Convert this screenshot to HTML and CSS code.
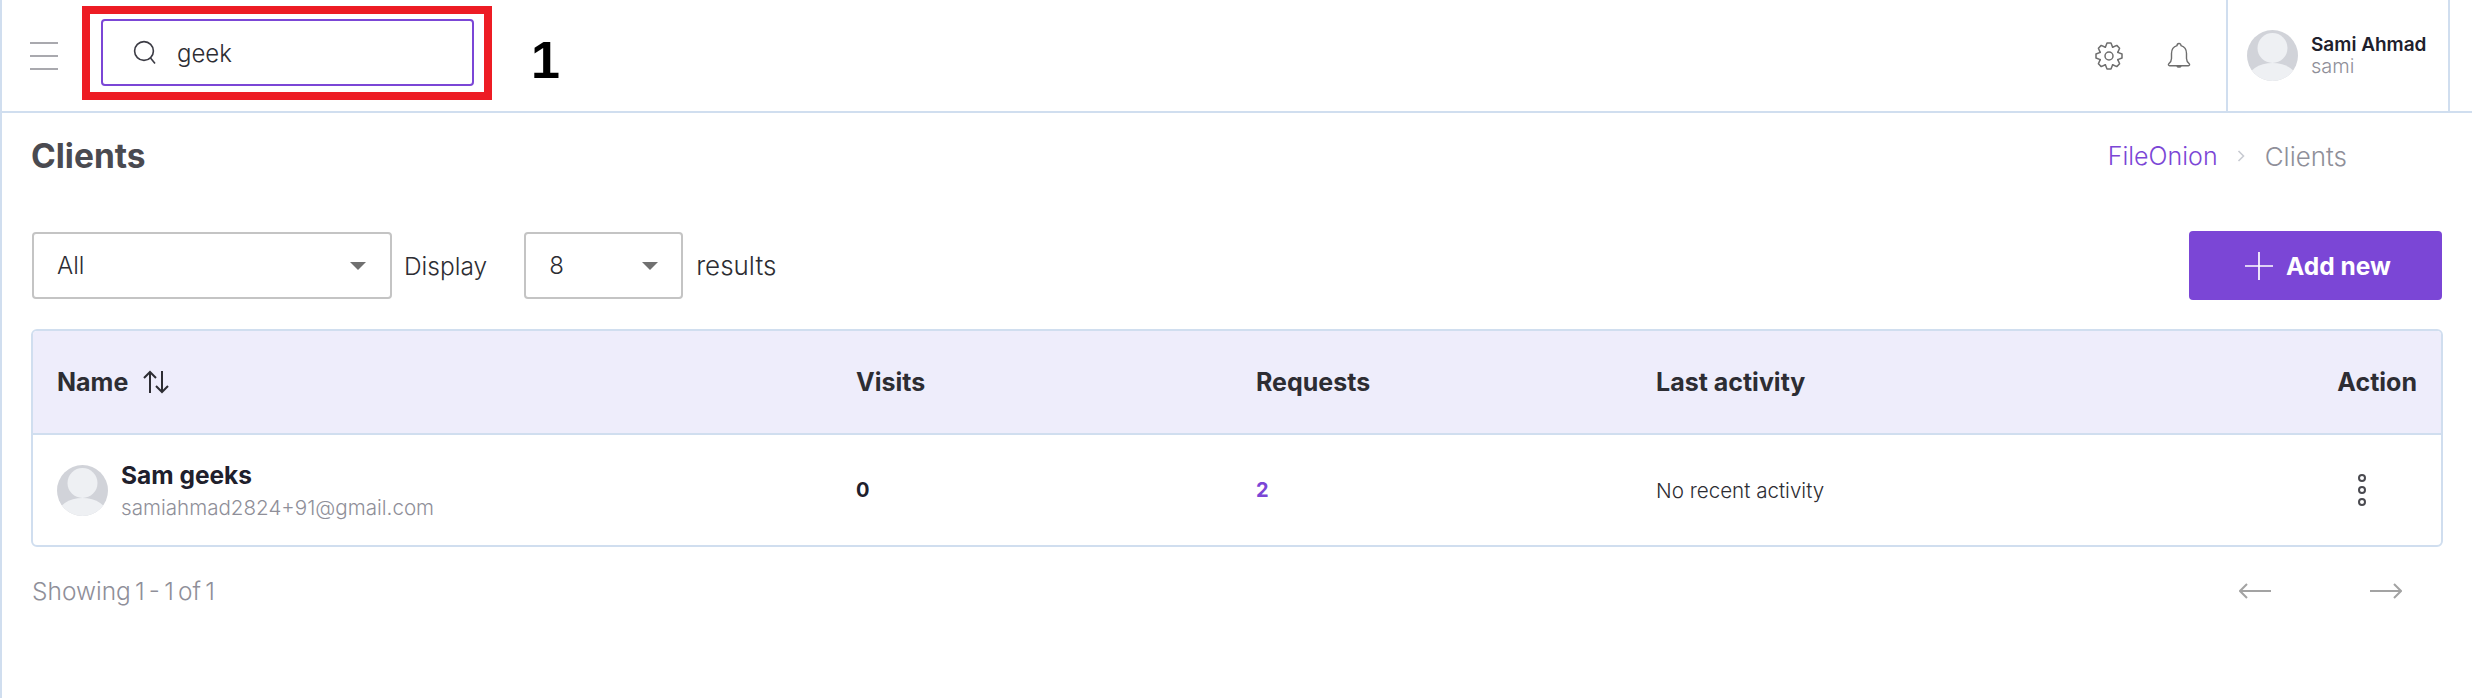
FILE: index.html
```html
<!DOCTYPE html>
<html lang="en">
<head>
<meta charset="utf-8">
<title>Clients</title>
<link rel="stylesheet" href="styles.css">
</head>
<body>
<div class="app">
  <header class="topbar">
    <button class="menu" aria-label="Menu"><span></span><span></span><span></span></button>
    <div class="search">
      <svg class="search-icon" viewBox="0 0 24 28" fill="none" stroke="#3b3b44" stroke-width="1.6"><circle cx="11" cy="12" r="9.4"/><path d="M17.5 19l4.500 5.500"/></svg>
      <span class="search-text">geek</span>
    </div>
    <div class="topbar-right">
      <svg class="gear" viewBox="-14 -14 28 28" fill="none" stroke="#6e6e6e" stroke-width="1.5" stroke-linejoin="round" stroke-linecap="round">
        <circle r="4"/>
        <path id="gear-tooth" d="M-3.64 -8.78L-2 -13H2L3.64 -8.78"/>
        <use href="#gear-tooth" transform="rotate(45)"/>
        <use href="#gear-tooth" transform="rotate(90)"/>
        <use href="#gear-tooth" transform="rotate(135)"/>
        <use href="#gear-tooth" transform="rotate(180)"/>
        <use href="#gear-tooth" transform="rotate(225)"/>
        <use href="#gear-tooth" transform="rotate(270)"/>
        <use href="#gear-tooth" transform="rotate(315)"/>
      </svg>
      <svg class="bell" viewBox="0 0 24 28" fill="none" stroke="#6e6e6e" stroke-width="1.4" stroke-linejoin="round"><path d="M12 1.500c-1.400 0-2 1-2 2.200C6.500 4.800 4.500 7.800 4.500 11.500v5c0 2.200-1 3.800-2.700 5.300-.8.8-.3 2 .8 2h18.800c1.100 0 1.600-1.200.8-2-1.700-1.500-2.700-3.100-2.700-5.300v-5c0-3.700-2-6.700-5.500-7.800 0-1.200-.6-2.200-2-2.200z"/><path d="M10 24c.3 1.500 3.700 1.500 4 0" fill="#6e6e6e"/></svg>
      <div class="profile">
        <svg class="avatar" viewBox="0 0 51 51"><use href="#avatar-shape"/></svg>
        <div class="profile-text">
          <div class="profile-name">Sami Ahmad</div>
          <div class="profile-user">sami</div>
        </div>
      </div>
    </div>
  </header>

  <div class="annotation-box"></div>
  <div class="annotation-num">1</div>

  <main class="content">
    <div class="title-row">
      <h1 class="title">Clients</h1>
      <nav class="crumbs">
        <span class="crumb-link">FileOnion</span>
        <svg class="crumb-sep" viewBox="0 0 8 12" fill="none" stroke="#c8cbd2" stroke-width="1.6"><path d="M1.500 1l5 5-5 5"/></svg>
        <span class="crumb-current">Clients</span>
      </nav>
    </div>

    <div class="toolbar">
      <div class="select select-wide"><span>All</span><i class="caret"></i></div>
      <span class="tool-label tool-display">Display</span>
      <div class="select select-narrow"><span>8</span><i class="caret"></i></div>
      <span class="tool-label tool-results">results</span>
      <button class="add-btn">
        <svg class="plus" viewBox="0 0 28 28" stroke="#fff" stroke-width="1.700"><path d="M0 14h28M14 0v28"/></svg>
        Add new
      </button>
    </div>

    <section class="table">
      <div class="thead">
        <div class="th name-head">Name
          <svg class="sort" viewBox="0 0 28 24" fill="none" stroke="#2d2d33" stroke-width="2"><path d="M8 23V2M2 8l6-6 6 6M20 1v21M14 16l6 6 6-6"/></svg>
        </div>
        <div class="th">Visits</div>
        <div class="th">Requests</div>
        <div class="th">Last activity</div>
        <div class="th th-right">Action</div>
      </div>
      <div class="trow">
        <div class="client">
          <svg class="avatar" viewBox="0 0 51 51"><use href="#avatar-shape"/></svg>
          <div>
            <div class="client-name">Sam geeks</div>
            <div class="client-mail">samiahmad2824+91@gmail.com</div>
          </div>
        </div>
        <div class="num">0</div>
        <div class="num num-link">2</div>
        <div class="activity">No recent activity</div>
        <div class="dots"><i></i><i></i><i></i></div>
      </div>
    </section>

    <div class="pager">
      <span class="showing">Showing 1 - 1 of 1</span>
      <div class="pager-arrows">
        <svg class="arrow" viewBox="0 0 32 16" fill="none" stroke="#a3a3a3" stroke-width="2"><path d="M32 8H1M8 1L1 8l7 7"/></svg>
        <svg class="arrow" viewBox="0 0 32 16" fill="none" stroke="#a3a3a3" stroke-width="2"><path d="M0 8h31M24 1l7 7-7 7"/></svg>
      </div>
    </div>
  </main>
</div>

<svg class="defs" width="0" height="0" aria-hidden="true">
  <defs>
    <clipPath id="avatar-clip"><circle cx="25.500" cy="25.500" r="25.500"/></clipPath>
    <g id="avatar-shape" clip-path="url(#avatar-clip)">
      <rect width="51" height="51" fill="#d1d3d9"/>
      <circle cx="25.500" cy="18" r="15" fill="#eef0f3"/>
      <ellipse cx="25.500" cy="50" rx="25" ry="17" fill="#eef0f3"/>
    </g>
  </defs>
</svg>
</body>
</html>
```
FILE: styles.css
```css
* { box-sizing: border-box; }
html, body { margin: 0; padding: 0; background: #fff; }
body { font-family: Inter, "Liberation Sans", sans-serif; color: #2d2d33; }
.app { position: relative; min-height: 698px; border-left: 2px solid #d0deef; }
.defs { position: absolute; }

.topbar { display: flex; align-items: center; height: 113px; border-bottom: 2px solid #d0deef; }
.menu { display: flex; flex-direction: column; gap: 11px; width: 28px; margin-left: 28px; padding: 0; background: none; border: 0; }
.menu span { display: block; height: 2px; background: #a9a9ae; }
.search { display: flex; align-items: center; align-self: flex-start; width: 373px; height: 67px; margin: 19px 0 0 43px; padding-left: 30px; border: 2px solid #7b46d6; border-radius: 4px; }
.search-icon { width: 24px; height: 28px; }
.search-text { margin-left: 20px; padding-top: 2px; font-size: 24px; font-weight: 300; color: #2d2d33; }
.topbar-right { display: flex; align-items: center; height: 100%; margin-left: auto; margin-right: 22px; }
.gear { width: 28px; height: 28px; margin-right: 44px; }
.bell { width: 24px; height: 28px; margin-right: 35px; }
.profile { display: flex; align-items: center; width: 224px; height: 100%; padding-left: 19px; border: solid #d0deef; border-width: 0 2px; }
.avatar { flex: none; width: 51px; height: 51px; }
.profile-text { margin-left: 13px; }
.profile-name { font-size: 19px; font-weight: 600; line-height: 22px; color: #20202c; white-space: nowrap; }
.profile-user { font-size: 20px; font-weight: 300; line-height: 21px; color: #8f8f99; }

.annotation-box { position: absolute; left: 80px; top: 6px; width: 410px; height: 94px; border: 8px solid #ed1c24; }
.annotation-num { position: absolute; left: 529px; top: 30px; font-family: "Liberation Sans", sans-serif; font-size: 52px; font-weight: 700; line-height: 60px; color: #000; }

.content { padding: 0 30px; }
.title-row { display: flex; align-items: center; justify-content: space-between; height: 86px; }
.title { margin: 0 0 0 -1px; font-size: 33.500px; font-weight: 700; color: #4a4a50; }
.crumbs { display: flex; align-items: center; margin-right: 95px; font-size: 25px; font-weight: 300; }
.crumb-link { color: #7b46d6; font-weight: 300; }
.crumb-sep { width: 8px; height: 12px; margin: 0 20px 0 19px; }
.crumb-current { font-size: 26px; color: #8f8f99; }

.toolbar { display: flex; align-items: center; height: 71px; margin-top: 31px; }
.select { display: flex; align-items: center; justify-content: space-between; height: 67px; border: 2px solid #c4c4c4; border-radius: 4px; font-size: 24px; font-weight: 300; color: #2d2d33; }
.select-wide { width: 360px; padding: 0 24px 0 23px; }
.select-narrow { width: 159px; padding: 0 23px; }
.caret { width: 0; height: 0; border: solid transparent; border-width: 8px 8px 0; border-top-color: #707070; }
.tool-label { font-size: 24.500px; font-weight: 300; color: #2d2d33; }
.tool-display { margin: 0 37px 0 12px; }
.tool-results { margin-left: 13px; font-size: 26px; }
.add-btn { display: flex; align-items: center; justify-content: center; gap: 13px; width: 253px; height: 69px; margin-left: auto; padding: 0 0 0 5px; background: #7b46d6; border: 0; border-radius: 4px; color: #fff; font: 700 24.500px Inter, sans-serif; }
.plus { width: 28px; height: 28px; }

.table { margin: 28px -1px 0; border: 2px solid #d0deef; border-radius: 6px; overflow: hidden; }
.thead, .trow { display: grid; grid-template-columns: 799px 400px 400px 1fr auto; padding: 0 24px; align-items: center; }
.thead { height: 104px; background: #eeedfb; border-bottom: 2px solid #d0deef; }
.trow { height: 110px; }
.th { font-size: 25px; font-weight: 700; color: #2d2d33; }
.th-right { text-align: right; }
.name-head { display: flex; align-items: center; gap: 14px; }
.sort { width: 28px; height: 24px; }
.client { display: flex; align-items: center; gap: 13px; }
.client-name { font-size: 24.500px; font-weight: 700; line-height: 30px; color: #20202c; }
.client-mail { margin-top: 6px; font-size: 20.600px; font-weight: 300; line-height: 24px; color: #8f8f99; }
.num { font-size: 20px; font-weight: 700; color: #20202c; }
.num-link { color: #7b46d6; }
.activity { font-size: 20.600px; font-weight: 300; color: #2d2d33; }
.dots { display: flex; flex-direction: column; gap: 4px; margin-right: 51px; }
.dots i { display: block; width: 8px; height: 8px; border: 2px solid #4a4a50; border-radius: 50%; }

.pager { display: flex; align-items: center; justify-content: space-between; margin-top: 29px; }
.showing { font-size: 24.500px; font-weight: 300; word-spacing: -2.700px; color: #8f8f99; }
.pager-arrows { display: flex; gap: 99px; margin-right: 40px; }
.arrow { width: 32px; height: 16px; }
```
